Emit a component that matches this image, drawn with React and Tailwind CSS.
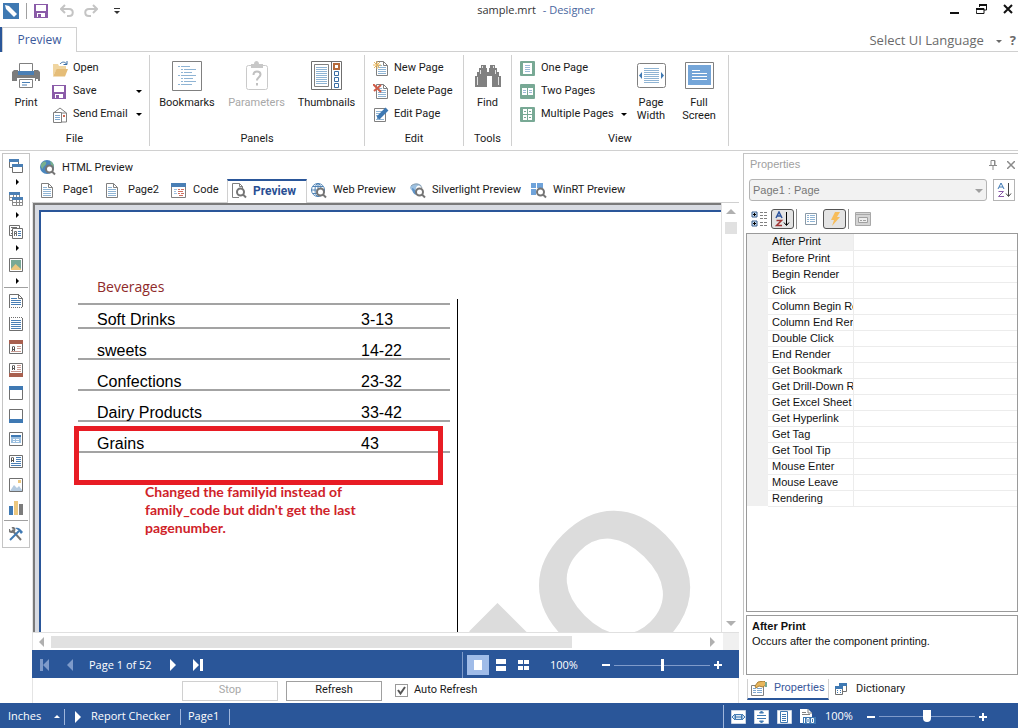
import React, { useState } from 'react';
import clsx from 'clsx';

const events = [
  'After Print', 'Before Print', 'Begin Render', 'Click', 'Column Begin Render', 'Column End Render',
  'Double Click', 'End Render', 'Get Bookmark', 'Get Drill-Down Report', 'Get Excel Sheet',
  'Get Hyperlink', 'Get Tag', 'Get Tool Tip', 'Mouse Enter', 'Mouse Leave', 'Rendering',
];

const families = [
  ['Soft Drinks', '3-13'],
  ['sweets', '14-22'],
  ['Confections', '23-32'],
  ['Dairy Products', '33-42'],
  ['Grains', '43'],
];

function Svg({ w = 16, h = 16, children, className }) {
  return (
    <svg width={w} height={h} viewBox={`0 0 ${w} ${h}`} fill="none" className={clsx('shrink-0', className)} aria-hidden="true">
      {children}
    </svg>
  );
}

// little triangle used by drop-downs, scrollbars and pagers
function Arrow({ dir = 'down', size = 3, className = 'fill-black' }) {
  const s = size;
  const shapes = {
    down: `0,0 ${2 * s},0 ${s},${s}`,
    up: `0,${s} ${2 * s},${s} ${s},0`,
    right: `0,0 ${s},${s} 0,${2 * s}`,
    left: `${s},0 0,${s} ${s},${2 * s}`,
  };
  const flat = dir === 'down' || dir === 'up';
  return (
    <svg width={flat ? 2 * s : s} height={flat ? s : 2 * s} className={clsx('shrink-0', className)} aria-hidden="true">
      <polygon points={shapes[dir]} />
    </svg>
  );
}

/* ---------- icons ---------- */

const SaveIcon = () => (
  <Svg w={14} h={14}>
    <path d="M0 0h14v14H0z" fill="#8a5ba8" />
    <path d="M2 1h10v6H2zM3 9h8v4H3z" fill="#fff" />
    <path d="M4 10h3v3H4z" fill="#8a5ba8" />
  </Svg>
);

const OpenIcon = () => (
  <Svg w={17}>
    <path d="M1 15V3h5l1 2h7v3H5z" fill="#f0d5a0" />
    <path d="M1 15.500 4.500 8H16l-3 7.500z" fill="#e5bd78" />
    <path d="M8 3c2-2.500 5-2.500 6.500 0M15 0v3.500h-3.500" stroke="#3a6ea5" />
  </Svg>
);

const MailIcon = () => (
  <Svg>
    <path d="M1.500 6 8 1l6.500 5v9h-5M14.500 6h-13" stroke="#808080" />
    <path d="M11 8h2v2h-2z" fill="#d0674f" />
    <path d="M1.500 5.500h8v10h-8z" fill="#fff" stroke="#808080" />
    <path d="M3 8.500h5M3 10.500h5M3 12.500h5" stroke="#7fa8cf" />
  </Svg>
);

const PrinterIcon = () => (
  <Svg w={28} h={26}>
    <path d="M7.500.500h13v8h-13z" fill="#fff" stroke="#808080" />
    <path d="M2 7h4v5h16V7h4l2 2v9h-5v-3H5v3H0V9z" fill="#7c7c7c" />
    <path d="M6 8h16v4H6z" fill="#4a7fb5" />
    <path d="M24 16h2v2h-2z" fill="#fff" />
    <path d="M7.500 16.500h13v8h-13z" fill="#fff" stroke="#808080" />
    <path d="M10 19.500h8M10 22h5" stroke="#4a7fb5" />
  </Svg>
);

const BookmarksIcon = () => (
  <Svg w={30} h={30}>
    <path d="M.500.500h29v29H.500z" fill="#fff" stroke="#808080" />
    <path d="M6 5.500h2M9 5.500h9M9 8.500h2M12 8.500h12M9 11.500h2M12 11.500h8M6 14.500h2M9 14.500h15M9 17.500h2M12 17.500h9M9 20.500h2M12 20.500h12M6 23.500h2M9 23.500h11" stroke="#8fb4d4" />
  </Svg>
);

const ParametersIcon = () => (
  <Svg w={24} h={30}>
    <rect x="1.500" y="4.500" width="21" height="24" rx="2" fill="#fff" stroke="#cacaca" />
    <path d="M6 3h3c0-4 5-4 5 0h4v4H6z" fill="#c8c8c8" />
    <path d="M8.500 14c0-5 7-4.500 7-.500 0 2.500-3.500 3-3.500 6M12 22v2.500" stroke="#c0c0c0" strokeWidth="2" />
  </Svg>
);

const ThumbnailsIcon = () => (
  <Svg w={31} h={29}>
    <path d="M.500.500h30v28H.500zM20.500.500v28" fill="#fff" stroke="#6f6f6f" />
    <path d="M3.500 3.500h14v22h-14z" stroke="#808080" />
    <path d="M5 6.500h11M5 8.500h11M5 10.500h11M5 12.500h11M5 14.500h11M5 16.500h11M5 18.500h11M5 20.500h11M5 22.500h11" stroke="#8fb4d4" />
    <path d="M23.500 10.500h4v4h-4zM23.500 16.500h4v4h-4zM23.500 22.500h4v4h-4z" stroke="#3a6ea5" />
    <path d="M23 3h5v5h-5z" stroke="#b5693a" strokeWidth="2" />
  </Svg>
);

// sheet with a folded corner, base of several icons
const Sheet = ({ x = 0 }) => (
  <g transform={`translate(${x} 0)`}>
    <path d="M.500.500h7l4 4v10H.500z" fill="#fff" stroke="#808080" />
    <path d="M7.500.500v4h4" stroke="#808080" />
    <path d="M2 4.500h4M2 6.500h8M2 8.500h8M2 10.500h8M2 12.500h8" stroke="#8fb4d4" />
  </g>
);

const PageIcon = () => <Svg w={12} h={15}><Sheet /></Svg>;

const NewPageIcon = () => (
  <Svg>
    <Sheet x={3} />
    <path d="M4 0v8M0 4h8M1 1l6 6M7 1 1 7" stroke="#e8b65c" />
  </Svg>
);

const DeletePageIcon = () => (
  <Svg>
    <Sheet x={3} />
    <path d="m0 0 8 8M8 1 1 7" stroke="#cf5b47" strokeWidth="2" />
  </Svg>
);

const EditPageIcon = () => (
  <Svg>
    <path d="M1.500 1.500h11v13h-11z" fill="#fff" stroke="#808080" />
    <path d="M3 4.500h8M3 6.500h6M3 8.500h4M3 12.500h8" stroke="#8fb4d4" />
    <path d="m5 11 9-9" stroke="#3f79b3" strokeWidth="4" />
    <path d="m4 12 1-4 3 3z" fill="#3f79b3" />
  </Svg>
);

const FindIcon = () => (
  <Svg w={26} h={24}>
    <path d="M6 1h5v3h1v4h2V4h1V1h5v3h2v4h2v4h2v11h-9V12h-5v11H0V12h2V8h2V4h2z" fill="#808080" />
    <path d="M2.500 13v8M23.500 13v8M5.500 6v4M20.500 6v4M7.500 2v2M18.500 2v2" stroke="#e2e2e2" />
  </Svg>
);

const GreenPages = ({ kind }) => (
  <Svg w={15} h={15}>
    <rect width="15" height="15" rx="1" fill="#78a995" />
    {kind === 1 && <path d="M3 2h9v11H3z" fill="#fff" />}
    {kind === 1 && <path d="M5 4.500h5M5 6.500h5M5 8.500h5M5 10.500h5" stroke="#9bb9d6" />}
    {kind === 2 && <path d="M2 4h5v7H2zM8 4h5v7H8z" fill="#fff" />}
    {kind === 2 && <path d="M3 6.500h3M3 8.500h3M9 6.500h3M9 8.500h3" stroke="#9bb9d6" />}
    {kind === 4 && <path d="M3 2h4v5H3zM8 2h4v5H8zM3 8h4v5H3zM8 8h4v5H8z" fill="#fff" />}
    {kind === 4 && <path d="M4 4.500h2M9 4.500h2M4 10.500h2M9 10.500h2" stroke="#78a995" />}
  </Svg>
);

const PageWidthIcon = () => (
  <Svg w={29} h={25}>
    <rect x=".5" y=".5" width="28" height="24" rx="2" fill="#fff" stroke="#808080" />
    <path d="M7 5.500h15M7 7.500h15M7 9.500h15M7 11.500h15M7 13.500h15M7 15.500h15M7 17.500h15M7 19.500h15" stroke="#8fb4d4" />
    <path d="M5 9v7l-3-3.500zM24 9v7l3-3.500z" fill="#3f79b3" />
  </Svg>
);

const FullScreenIcon = () => (
  <Svg w={29} h={27}>
    <path d="M.500.500h28v26H.500z" fill="#fff" stroke="#808080" />
    <path d="M3 3h23v20H3z" fill="#74a5d8" />
    <path d="M7 8.500h8M7 11.500h15M7 14.500h15M7 17.500h15" stroke="#fff" />
  </Svg>
);

const Lens = () => (
  <g stroke="#757575" strokeWidth="2">
    <circle cx="9.500" cy="9" r="3.500" fill="#fff" />
    <path d="m12 11.500 3 3" />
  </g>
);

const HtmlIcon = () => (
  <Svg>
    <circle cx="7" cy="7" r="7" fill="#4a86bd" />
    <path d="M2 3c3-3 5-1 4 1s-3 2-3 5c-2-1-3-4-1-6zM10 1c3 1 4 4 4 6l-3-2z" fill="#79b08d" />
    <Lens />
  </Svg>
);

const PreviewIcon = () => (
  <Svg>
    <path d="M8 14.500H1.500V.500h7l3 3V6M8.500.500v3h3" stroke="#808080" />
    <Lens />
  </Svg>
);

const WebIcon = () => (
  <Svg>
    <circle cx="7" cy="7" r="6.500" stroke="#4f83b5" />
    <path d="M7 0v14M0 7h14M2 3.500h10M2 10.500h10" stroke="#4f83b5" />
    <ellipse cx="7" cy="7" rx="3" ry="6.500" stroke="#4f83b5" />
    <Lens />
  </Svg>
);

const SilverlightIcon = () => (
  <Svg>
    <path d="M0 4C4-1 11 0 12 4 9 1 5 3 6 8 3 9 0 7 0 4z" fill="#9cc0e0" />
    <path d="M2 5c2 0 4 3 5 7-3 0-5-3-5-7z" fill="#5f93c7" />
    <path d="M1 3C4 0 10 0 12 5" stroke="#8b9dac" />
    <Lens />
  </Svg>
);

const WinRtIcon = () => (
  <Svg>
    <path d="M0 0h5v5H0zM6 0h6v5H6zM0 6h5v6H0zM6 6h6v6H6z" fill="#6fa3da" />
    <Lens />
  </Svg>
);

const CodeIcon = () => (
  <Svg w={15} h={15}>
    <path d="M.500.500h14v14H.500z" fill="#fff" stroke="#808080" />
    <path d="M0 0h15v4H0z" fill="#4a7fb5" />
    <path d="M3 6.500h3M3 8.500h2M3 10.500h3" stroke="#9cc0e0" />
    <path d="M7 6.500h2M10 6.500h3M7 8.500h5M7 10.500h2M10 10.500h3M8 12.500h4" stroke="#cf6f5f" />
  </Svg>
);

/* left toolbox icons, all 14x14 */

const toolIcons = {
  bands: (
    <>
      <path d="M.500.500h9v8h-9z" fill="#fff" stroke="#6f6f6f" />
      <path d="M0 0h10v3H0z" fill="#4a7fb5" />
      <path d="M3.500 5.500h10v8h-10z" fill="#fff" stroke="#6f6f6f" />
      <path d="M3 5h11v3H3z" fill="#4a7fb5" />
    </>
  ),
  cross: (
    <>
      <path d="M.500.500h10v8h-10zM.500 5.500h10M4.500 0v8M7.500 0v8" fill="#fff" stroke="#8a8a8a" />
      <path d="M0 0h11v3H0z" fill="#4a7fb5" />
      <path d="M3.500 5.500h10v8h-10zM3 10.500h11M7.500 8v6M10.500 8v6" fill="#fff" stroke="#8a8a8a" />
      <path d="M3 5h11v3H3z" fill="#4a7fb5" />
    </>
  ),
  components: (
    <>
      <path d="M.500.500h10v10h-10z" fill="#fff" stroke="#6f6f6f" />
      <path d="M2 2.500h6M2 5.500h1M2 8.500h1" stroke="#6f6f6f" />
      <path d="M3.500 3.500h10v10h-10z" fill="#fff" stroke="#6f6f6f" />
      <path d="M5.500 11V6.500h2V11M5 8.500h3" stroke="#6f6f6f" />
      <path d="M9 6.500h3M9 8.500h3M9 10.500h3" stroke="#4a7fb5" />
    </>
  ),
  picture: (
    <>
      <path d="M.500.500h13v13H.500z" fill="#fff" stroke="#6f6f6f" />
      <path d="M2 2h10v10H2z" fill="#78a995" />
      <path d="m2 11 4.500-5L12 11v1H2z" fill="#ecc77e" />
    </>
  ),
  title: (
    <>
      <path d="M.500 13V.500h9l4 4V13" fill="#fff" stroke="#6f6f6f" />
      <path d="M9.500 0v4.500h4" stroke="#6f6f6f" />
      <path d="M2 4.500h6M2 6.500h10M2 8.500h10M2 10.500h10" stroke="#4a7fb5" />
      <path d="M0 13.500h14" stroke="#6f6f6f" strokeDasharray="1 1" />
    </>
  ),
  summary: (
    <>
      <path d="M.500 1v12.500h13V1" stroke="#6f6f6f" />
      <path d="M0 .5h14" stroke="#6f6f6f" strokeDasharray="1 1" />
      <path d="M2 3.500h10M2 5.500h10M2 7.500h10M2 9.500h10M2 11.500h10" stroke="#4a7fb5" />
    </>
  ),
  groupHeader: (
    <>
      <path d="M.500.500h13v13H.500z" fill="#fff" stroke="#6f6f6f" />
      <path d="M0 0h14v4H0z" fill="#a9604f" />
      <path d="M3.500 11V7l1-1 1 1v4M3 9.500h3" stroke="#555" />
      <path d="M8 6.500h4M8 8.500h4M2 11.500h10" stroke="#c99c93" />
    </>
  ),
  groupFooter: (
    <>
      <path d="M.500.500h13v13H.500z" fill="#fff" stroke="#6f6f6f" />
      <path d="M0 10h14v4H0z" fill="#a9604f" />
      <path d="M3.500 7V3l1-1 1 1v4M3 5.500h3" stroke="#555" />
      <path d="M8 2.500h4M8 4.500h4M8 6.500h4M2 8.500h10" stroke="#c99c93" />
    </>
  ),
  header: (
    <>
      <path d="M.500.500h13v13H.500z" fill="#fff" stroke="#6f6f6f" />
      <path d="M0 0h14v4H0z" fill="#3f79b3" />
    </>
  ),
  footer: (
    <>
      <path d="M.500.500h13v13H.500z" fill="#fff" stroke="#6f6f6f" />
      <path d="M0 10h14v4H0z" fill="#3f79b3" />
    </>
  ),
  data: (
    <>
      <path d="M.500.500h13v13H.500z" fill="#fff" stroke="#6f6f6f" />
      <path d="M2 3h10v8H2z" fill="#9cc0e0" />
      <path d="M2 3h10v2H2z" fill="#3f79b3" />
      <path d="M4 7.500h2M7 7.500h3M4 9.500h2M7 9.500h3" stroke="#fff" />
    </>
  ),
  text: (
    <>
      <path d="M.500.500h13v12H.500z" fill="#fff" stroke="#6f6f6f" />
      <path d="M2.500 7V3l1-1 1 1v4M2 5.500h3" stroke="#555" />
      <path d="M7 2.500h5M7 4.500h5M7 6.500h5M2 8.500h10M2 10.500h10" stroke="#4a7fb5" />
    </>
  ),
  image: (
    <>
      <path d="M.500.500h13v13H.500z" fill="#fff" stroke="#6f6f6f" />
      <path d="m1 13 4-6 3 3 2-2 3 4v1z" fill="#b5cbe0" />
      <path d="M9 2h3v3H9z" fill="#ecc77e" />
    </>
  ),
  chart: (
    <>
      <path d="M0 5h4v9H0z" fill="#3f79b3" />
      <path d="M5 0h4v14H5z" fill="#ecc77e" />
      <path d="M10 3h4v11h-4z" fill="#7c7c7c" />
    </>
  ),
  tools: (
    <>
      <path d="m3 3 9 10" stroke="#757575" strokeWidth="2" />
      <path d="M0 2c0 3 3 4 5 2M3 0c2 1 3 2 2 4" stroke="#757575" strokeWidth="2" />
      <path d="m1 13 9-9" stroke="#3f79b3" strokeWidth="2" />
      <path d="M6 1c3-1 5 0 8 4l-2 2-3-4z" fill="#3f79b3" />
    </>
  ),
};

const toolbox = [
  { icon: 'bands', menu: true }, { icon: 'cross', menu: true }, { icon: 'components', menu: true }, { icon: 'picture', menu: true }, null,
  { icon: 'title' }, { icon: 'summary' }, { icon: 'groupHeader' }, { icon: 'groupFooter' }, { icon: 'header' },
  { icon: 'footer' }, { icon: 'data' }, { icon: 'text' }, { icon: 'image' }, { icon: 'chart' }, null,
  { icon: 'tools' },
];

/* ---------- top of the window ---------- */

function TitleBar() {
  return (
    <header className="flex h-[27px] items-start pt-[3px] pr-[5px] pl-[3px]">
      <div className="flex flex-1 items-center">
        <Svg>
          <path d="M0 0h16v16H0z" fill="#3f79b3" />
          <path d="m2 2 4 1 8 8-3 3-8-8z" fill="#fff" />
        </Svg>
        <span className="mx-[7px] h-4 w-px bg-[#a0a0a0]" />
        <button aria-label="Save"><SaveIcon /></button>
        <button aria-label="Undo" className="ml-3">
          <Svg w={14} h={14}><path d="M5 1 1 5l4 4M1 5h8c5 0 5 7 0 7H7" stroke="#c4c4c4" strokeWidth="2" /></Svg>
        </button>
        <button aria-label="Redo" className="ml-2.5">
          <Svg w={14} h={14}><path d="m9 1 4 4-4 4M13 5H5c-5 0-5 7 0 7h2" stroke="#c4c4c4" strokeWidth="2" /></Svg>
        </button>
        <button aria-label="Customize toolbar" className="ml-4">
          <Svg w={6} h={7}><path d="M0 .500h6" stroke="#333" /><path d="M0 3h6L3 6z" fill="#333" /></Svg>
        </button>
      </div>
      <h1 className="pl-14 font-['Open_Sans',sans-serif] text-[11px] leading-[14px] text-[#333]">
        sample.mrt <span className="ml-1 text-[#4a67a0]">- Designer</span>
      </h1>
      <div className="flex flex-1 justify-end gap-4">
        <button aria-label="Minimize"><Svg w={10} h={12}><path d="M0 10h9" stroke="#111" strokeWidth="2" /></Svg></button>
        <button aria-label="Restore">
          <Svg w={11} h={12}><path d="M3.500 4V2h7v5H8M0 5.500h8v5H.500z" stroke="#111" /><path d="M3 2h8M0 6h8" stroke="#111" strokeWidth="2" /></Svg>
        </button>
        <button aria-label="Close"><Svg w={10} h={12}><path d="m1 2 8 8M9 2l-8 8" stroke="#111" strokeWidth="2" /></Svg></button>
      </div>
    </header>
  );
}

function RibbonTabs() {
  return (
    <div className="flex h-[25px] items-stretch font-['Open_Sans',sans-serif]">
      <span className="w-0.5 bg-[#2a5699]" />
      <button className="w-[75px] border-x border-t border-[#d0d0d0] text-xs leading-[22px] text-[#3c5a9c]">Preview</button>
      <div className="flex flex-1 items-center justify-end border-b border-[#d0d0d0] pt-1 pr-0.5">
        <button className="flex items-center text-[13px] text-[#6a6a6a]">
          Select UI Language <Arrow size={3} className="ml-3 fill-[#6a6a6a]" />
        </button>
        <button aria-label="Help" className="ml-2 text-[13px] font-bold text-[#6a6a6a]">?</button>
      </div>
    </div>
  );
}

function Group({ label, className, children }) {
  return (
    <section className={clsx('flex shrink-0 flex-col border-r border-[#d0d0d0]', className)}>
      <div className="flex flex-1 pt-0.5">{children}</div>
      <h2 className="text-center leading-[14px]">{label}</h2>
    </section>
  );
}

function Big({ icon, label, className, disabled }) {
  return (
    <button disabled={disabled} className={clsx('flex shrink-0 flex-col items-center leading-[13px] disabled:text-[#a8a8a8]', className)}>
      <span className="mb-0.5 flex h-[37px] items-center">{icon}</span>
      {label}
    </button>
  );
}

function Small({ icon, label, menu }) {
  return (
    <button className="flex h-[23px] items-center text-left whitespace-nowrap">
      <span className="mr-1 flex w-[17px]">{icon}</span>
      {label}
      {menu && <Arrow className="ml-auto fill-black" />}
    </button>
  );
}

function Ribbon() {
  return (
    <nav className="flex h-[99px] border-b border-[#d0d0d0] pt-[3px] pb-1">
      <Group label="File" className="w-[150px]">
        <Big icon={<PrinterIcon />} label="Print" className="w-[52px]" />
        <div className="flex flex-1 flex-col pr-[7px]">
          <Small icon={<OpenIcon />} label="Open" />
          <Small icon={<SaveIcon />} label="Save" menu />
          <Small icon={<MailIcon />} label="Send Email" menu />
        </div>
      </Group>
      <Group label="Panels" className="w-[215px]">
        <Big icon={<BookmarksIcon />} label="Bookmarks" className="w-[74px]" />
        <Big icon={<ParametersIcon />} label="Parameters" className="w-[65px]" disabled />
        <Big icon={<ThumbnailsIcon />} label="Thumbnails" className="flex-1" />
      </Group>
      <Group label="Edit" className="w-[99px]">
        <div className="flex flex-col pl-2">
          <Small icon={<NewPageIcon />} label="New Page" />
          <Small icon={<DeletePageIcon />} label="Delete Page" />
          <Small icon={<EditPageIcon />} label="Edit Page" />
        </div>
      </Group>
      <Group label="Tools" className="w-12">
        <Big icon={<FindIcon />} label="Find" className="flex-1" />
      </Group>
      <Group label="View" className="w-[217px]">
        <div className="flex w-[115px] flex-col pl-2">
          <Small icon={<GreenPages kind={1} />} label="One Page" />
          <Small icon={<GreenPages kind={2} />} label="Two Pages" />
          <Small icon={<GreenPages kind={4} />} label="Multiple Pages" menu />
        </div>
        <Big icon={<PageWidthIcon />} label={<>Page<br />Width</>} className="w-12" />
        <Big icon={<FullScreenIcon />} label={<>Full<br />Screen</>} className="w-12" />
      </Group>
    </nav>
  );
}

/* ---------- left ---------- */

function Toolbox() {
  return (
    <aside className="mt-0.5 ml-0.5 flex w-7 shrink-0 flex-col self-start border border-[#c4c4c4] pb-0.5">
      {toolbox.map((t, i) => t === null ? (
        <span key={i} className="mx-px my-px h-px bg-[#a0a0a0]" />
      ) : (
        <button key={i} aria-label={t.icon} className="flex flex-col items-center">
          <span className="flex h-[23px] items-center"><Svg w={14} h={14}>{toolIcons[t.icon]}</Svg></span>
          {t.menu && <span className="flex h-2.5 items-center pl-0.5"><Arrow dir="right" /></span>}
        </button>
      ))}
    </aside>
  );
}

/* ---------- centre ---------- */

function DocTab({ icon, label, active, className }) {
  return (
    <button
      className={clsx(
        'flex h-6 shrink-0 items-center whitespace-nowrap',
        active ? 'border-x border-t-2 border-x-[#d0d0d0] border-t-[#2a5699] pb-0.5 text-xs font-bold text-[#2a4f94]' : 'border-b border-[#d0d0d0]',
        className,
      )}
    >
      <span className="mr-[6px] flex w-4">{icon}</span>
      {label}
    </button>
  );
}

function DocTabs() {
  return (
    <div className="pt-[6px]">
      <button className="ml-2 flex h-[22px] items-center gap-1.5"><HtmlIcon />HTML Preview</button>
      <div className="flex">
        <DocTab icon={<PageIcon />} label="Page1" className="w-[74px] pl-[9px]" />
        <DocTab icon={<PageIcon />} label="Page2" className="w-[65px]" />
        <DocTab icon={<CodeIcon />} label="Code" className="w-14" />
        <DocTab icon={<PreviewIcon />} label="Preview" active className="w-20 pl-[3px]" />
        <DocTab icon={<WebIcon />} label="Web Preview" className="w-[103px] pl-1" />
        <DocTab icon={<SilverlightIcon />} label="Silverlight Preview" className="w-[121px]" />
        <DocTab icon={<WinRtIcon />} label="WinRT Preview" className="flex-1" />
      </div>
    </div>
  );
}

function Report() {
  return (
    <div className="relative flex flex-1 overflow-hidden border-t-2 border-l-2 border-[#2a5699] bg-white">
      <svg className="absolute inset-0 h-full w-full" aria-hidden="true">
        <text
          transform="translate(573 372) rotate(-45)"
          x="80"
          y="74"
          textAnchor="end"
          className="fill-[#dcdcdc] font-['Liberation_Sans',Arial,sans-serif] text-[208px] font-bold"
        >
          DEMO
        </text>
      </svg>
      <div className="relative w-[416px] shrink-0 pl-[37px] font-['Liberation_Sans',Arial,sans-serif]">
        <table className="mt-[65px] w-[372px] text-base leading-[14px] text-black">
          <caption className="h-[26px] pl-[19px] text-left font-['Open_Sans',sans-serif] text-sm leading-[20px] text-[#8f2a2a]">Beverages</caption>
          <tbody className="border-t-2 border-[#a3a3a3]">
            {families.map(([name, pages]) => (
              <tr key={name} className="h-[31px] border-b-2 border-[#a3a3a3] first:h-6">
                <td className="w-[283px] pl-[19px] align-bottom">{name}</td>
                <td className="align-bottom">{pages}</td>
              </tr>
            ))}
          </tbody>
        </table>
        <div className="absolute top-[214px] left-[33px] h-[59px] w-[369px] border-[5px] border-[#e81c24]" />
        <p className="mt-[30px] ml-[67px] font-['Lato',sans-serif] text-sm leading-[18px] font-bold text-[#cf2229]">
          Changed the familyid instead of<br />family_code but didn't get the last<br />pagenumber.
        </p>
      </div>
      <div className="relative mt-[87px] flex-1 border-l border-black" />
    </div>
  );
}

function Viewer() {
  return (
    <div className="flex min-h-0 flex-1 flex-col border-l border-[#e4e4e4]">
      <div className="flex min-h-0 flex-1">
        <div className="flex flex-1 border-t-2 border-l-2 border-[#7a7a7a] bg-[#d8dbe2] pt-[5px] pl-1"><Report /></div>
        <div className="flex w-[18px] flex-col items-center border-l border-[#e0e0e0] py-1.5">
          <Arrow dir="up" size={5} className="fill-[#b0b0b0]" />
          <span className="mt-2 h-3 w-3 bg-[#e1e1e1]" />
          <Arrow dir="down" size={5} className="mt-auto fill-[#b0b0b0]" />
        </div>
      </div>
      <div className="flex h-[18px] shrink-0 border-t border-[#e0e0e0]">
        <div className="flex flex-1 items-center pr-2 pl-1.5">
          <Arrow dir="left" size={5} className="fill-[#b0b0b0]" />
          <span className="ml-[7px] h-3 w-[77%] bg-[#e1e1e1]" />
          <Arrow dir="right" size={5} className="ml-auto fill-[#b0b0b0]" />
        </div>
        <span className="w-4 bg-[#f0f0f0]" />
      </div>
    </div>
  );
}

function Zoom({ label, value, onChange, pointed }) {
  return (
    <>
      <button aria-label={`${label} out`}><Svg w={8} h={8}><path d="M0 4h8" stroke="#fff" strokeWidth="2" /></Svg></button>
      <input
        type="range"
        min="0"
        max="200"
        aria-label={label}
        value={value}
        onChange={e => onChange(Number(e.target.value))}
        className={clsx(
          'mx-1 h-3 w-24 appearance-none bg-transparent [&::-webkit-slider-runnable-track]:h-px [&::-webkit-slider-runnable-track]:bg-[#7f9bca]',
          '[&::-webkit-slider-thumb]:-mt-1.5 [&::-webkit-slider-thumb]:h-3 [&::-webkit-slider-thumb]:appearance-none [&::-webkit-slider-thumb]:bg-white',
          pointed
            ? '[&::-webkit-slider-thumb]:w-2 [&::-webkit-slider-thumb]:rounded-b-sm'
            : '[&::-webkit-slider-thumb]:w-[3px]',
        )}
      />
      <button aria-label={`${label} in`}><Svg w={8} h={8}><path d="M0 4h8M4 0v8" stroke="#fff" strokeWidth="2" /></Svg></button>
    </>
  );
}

function Pager() {
  const [zoom, setZoom] = useState(100);
  return (
    <div className="flex h-7 shrink-0 items-center bg-[#2a5699] pt-0.5 pr-[17px] pl-2 font-['Open_Sans',sans-serif] text-[11px] text-white">
      <button aria-label="First page"><Svg w={10} h={12}><path d="M0 0h3v12H0zM9 0v12L3 6z" fill="#7f9bca" /></Svg></button>
      <button aria-label="Previous page" className="ml-[17px]"><Arrow dir="left" size={6} className="fill-[#7f9bca]" /></button>
      <span className="ml-4 w-[65px] whitespace-nowrap">Page 1 of 52</span>
      <button aria-label="Next page" className="ml-4"><Arrow dir="right" size={6} className="fill-white" /></button>
      <button aria-label="Last page" className="ml-[17px]"><Svg w={10} h={12}><path d="M7 0h3v12H7zM0 0v12l6-6z" fill="#fff" /></Svg></button>
      <span className="ml-auto h-[26px] w-px bg-[#7f9bca]" />
      <button aria-label="Single page" className="ml-1 flex h-5 w-[22px] items-center justify-center bg-[#a0bce8]"><span className="h-2.5 w-2 bg-white" /></button>
      <button aria-label="Continuous" className="ml-[7px]"><Svg w={10} h={12}><path d="M0 0h10v5H0zM0 7h10v5H0z" fill="#fff" /></Svg></button>
      <button aria-label="Multiple pages" className="mr-[21px] ml-3"><Svg w={11} h={12}><path d="M0 1h5v4H0zM6 1h5v4H6zM0 7h5v4H0zM6 7h5v4H6z" fill="#fff" /></Svg></button>
      <span className="mr-[22px] w-[30px]">100%</span>
      <Zoom label="Preview zoom" value={zoom} onChange={setZoom} />
    </div>
  );
}

function RefreshBar() {
  const [auto, setAuto] = useState(true);
  return (
    <div className="flex h-[25px] shrink-0 items-center border-r border-l border-[#e4e4e4] pl-[149px]">
      <button disabled className="h-5 w-24 border border-[#d0d0d0] text-[#a8a8a8]">Stop</button>
      <button className="ml-2 h-5 w-24 border border-[#a0a0a0]">Refresh</button>
      <label className="ml-[13px] flex items-center gap-1.5">
        <span className="relative flex">
          <input type="checkbox" checked={auto} onChange={e => setAuto(e.target.checked)} className="h-[13px] w-[13px] appearance-none border border-[#9a9a9a]" />
          {auto && <Svg w={13} h={13} className="pointer-events-none absolute inset-0"><path d="m3 6 2.500 3.500L10 3" stroke="#555" strokeWidth="2" /></Svg>}
        </span>
        Auto Refresh
      </label>
    </div>
  );
}

/* ---------- right ---------- */

function SortIcon({ dark }) {
  return (
    <Svg w={15} h={16}>
      <path d="m1 7 3-6 3 6M2 5h4" stroke={dark ? '#2f559e' : '#3f79b3'} strokeWidth={dark ? 1.5 : 1} />
      <path d="M1.500 9.500h5l-5 5H7" stroke={dark ? '#a03535' : '#8a5ba8'} strokeWidth={dark ? 1.5 : 1} />
      <path d="M11.500 1v13M9 11.500l2.500 3 2.500-3" stroke={dark ? '#000' : '#444'} />
    </Svg>
  );
}

function PropertiesPanel() {
  return (
    <aside className="ml-1 flex w-[275px] shrink-0 flex-col font-['Liberation_Sans',Arial,sans-serif]">
      <div className="mt-0.5 flex min-h-0 flex-1 flex-col border-t border-l border-[#c4c4c4] pl-0.5">
        <div className="flex h-[21px] items-center pr-[3px] pl-1 text-[#a0a0a0]">
          Properties
          <button aria-label="Pin" className="ml-auto"><Svg w={8} h={10}><path d="M2 5V.500h4V5M5.500 1v4M0 5.500h8M4 6v4" stroke="#8a8a8a" /></Svg></button>
          <button aria-label="Close panel" className="ml-2.5"><Svg w={8} h={8}><path d="m0 0 8 8M8 0 0 8" stroke="#8a8a8a" strokeWidth="1.500" /></Svg></button>
        </div>
        <div className="mt-1 flex gap-1.5 pr-[3px] pl-[3px]">
          <div className="relative flex-1">
            <select aria-label="Component" className="h-[22px] w-full appearance-none rounded-[3px] border border-[#b4b4b4] bg-[#f2f2f2] px-[3px] text-[#777]">
              <option>Page1 : Page</option>
            </select>
            <span className="pointer-events-none absolute top-[10px] right-1"><Arrow size={4} className="fill-[#a0a0a0]" /></span>
          </div>
          <button aria-label="Sort" className="flex h-[22px] w-[22px] items-center justify-center border border-[#b4b4b4]"><SortIcon /></button>
        </div>
        <div className="flex h-8 items-center pt-1 pl-[5px]">
          <button aria-label="Categorized">
            <Svg w={17}>
              <path d="M1 1h5v5H1zM1 10h5v5H1z" fill="#cfe0f0" stroke="#3a6090" strokeLinejoin="round" />
              <path d="M2 3.500h3M3.500 2v3M2 12.500h3M3.500 11v3" stroke="#000" />
              <path d="M9 1.500h3M13 1.500h3M9 4.500h3M13 4.500h3M9 7.500h3M13 7.500h3M9 11.500h3M13 11.500h3M9 14.500h3M13 14.500h3" stroke="#808080" />
            </Svg>
          </button>
          <button aria-label="Alphabetical" className="ml-[3px] flex h-5 w-[23px] items-center justify-center rounded-[3px] border border-[#555] bg-[#e4e4e4]"><SortIcon dark /></button>
          <span className="ml-0.5 h-5 w-px bg-[#909090]" />
          <button aria-label="Property list" className="ml-2">
            <Svg w={12} h={12}><path d="M.500.500h11v11H.500z" stroke="#8a9aa8" /><path d="M2 2.500h2M5 2.500h5M2 4.500h2M5 4.500h5M2 6.500h2M5 6.500h5M2 8.500h2M5 8.500h5" stroke="#8fb4d4" /></Svg>
          </button>
          <button aria-label="Events" className="ml-[6px] flex h-5 w-[23px] items-center justify-center rounded-[3px] border border-[#555] bg-[#e4e4e4]">
            <Svg w={10} h={14}><path d="M5 0h5L7 5h3L2 14l2-6H1z" fill="#f7bd5b" /></Svg>
          </button>
          <span className="ml-0.5 h-5 w-px bg-[#909090]" />
          <button aria-label="Property pages" className="ml-1.5" disabled>
            <Svg w={16} h={14}><path d="M.500.500h15v13H.500z" fill="#d4d4d4" stroke="#a8a8a8" /><path d="M1 2.500h14" stroke="#a8a8a8" /><path d="M3.500 5.500h9v5h-9zM5 8.500h2M8 8.500h3" stroke="#a0a0a0" fill="#eee" /></Svg>
          </button>
        </div>
        <div className="min-h-0 flex-1 overflow-hidden border border-[#9a9a9a]">
          <table className="w-full table-fixed leading-[15px] text-[#111]">
            <tbody>
              {events.map((name, i) => (
                <tr key={name} className="h-4">
                  <td className="w-[21px] bg-[#f0f0f0]" />
                  <th scope="row" className={clsx('w-[85px] overflow-hidden border-r border-b border-[#ececec] pl-1 text-left font-normal whitespace-nowrap', i === 0 && 'bg-[#f0f0f0]')}>{name}</th>
                  <td className="border-b border-[#ececec]" />
                </tr>
              ))}
            </tbody>
          </table>
        </div>
        <div className="mt-[3px] h-[60px] shrink-0 border border-[#9a9a9a] px-[5px] pt-[3px] leading-[15px] text-[#111]">
          <h3 className="font-bold">After Print</h3>
          <p>Occurs after the component printing.</p>
        </div>
      </div>
      <div className="ml-1 flex h-[28px] shrink-0 items-start pt-1 font-['Roboto',sans-serif]">
        <button className="flex h-[21px] w-[82px] items-center gap-1.5 border-r border-b-2 border-l border-x-[#d0d0d0] border-b-[#2a5699] pl-[3px] text-[#3c5a9c]">
          <Svg w={17}>
            <path d="M.500 4.500h12v10H.500z" fill="#fff" stroke="#808080" />
            <path d="M2 7.500h3M6 7.500h5M2 9.500h3M6 9.500h5M2 11.500h3M6 11.500h5" stroke="#7fa8cf" />
            <path d="m4 5 3-4 6-1 3 3-4 3-4-1-3 2z" fill="#e8b65c" stroke="#a87f35" />
            <path d="M14 1h2v5h-2z" fill="#78a995" />
          </Svg>
          Properties
        </button>
        <button className="ml-[6px] flex h-5 items-center gap-[9px]">
          <Svg w={12} h={12}>
            <path d="M4.500.500h7v8h-7z" fill="#fff" stroke="#6f6f6f" /><path d="M4 0h8v3H4z" fill="#3f79b3" />
            <path d="M.500 4.500h7v7h-7z" fill="#fff" stroke="#6f6f6f" /><path d="M0 3h8v3H0z" fill="#3f79b3" />
            <path d="M2 7.500h1M5 7.500h1M2 9.500h1M5 9.500h1" stroke="#3f79b3" />
          </Svg>
          Dictionary
        </button>
      </div>
    </aside>
  );
}

/* ---------- bottom ---------- */

function StatusBar() {
  const [zoom, setZoom] = useState(100);
  const views = [
    ['Fit width', <path key="p" d="m1 7 3-3v6zM14 7l-3-3v6zM4.500 4.500h6v5h-6zM5 7h5" fill="#dbe7f3" stroke="#3f79b3" />],
    ['Fit height', <path key="p" d="m7.500 1 2 2h-4zM7.500 13l2-2h-4zM3 5.500h9M3 8.500h9" fill="#3f79b3" stroke="#3f79b3" />],
    ['Whole page', <path key="p" d="M3.500 1.500h7v11h-7zM5 4.500h4M5 6.500h4M5 8.500h4M5 10.500h4" stroke="#3f79b3" />],
  ];
  return (
    <footer className="flex h-[25px] shrink-0 items-center bg-[#2a5699] pt-0.5 pr-[31px] pl-2 font-['Open_Sans',sans-serif] text-[11px] whitespace-nowrap text-white">
      <button className="flex w-14 items-center">Inches <Arrow dir="up" size={3} className="mr-1 ml-auto fill-white" /></button>
      <span className="h-4 w-px bg-[#9fb6dc]" />
      <button className="ml-2.5 flex w-[105px] items-center gap-2.5"><Arrow dir="right" size={6} className="fill-white" />Report Checker</button>
      <span className="h-4 w-px bg-[#9fb6dc]" />
      <span className="w-12 pl-[7px]">Page1</span>
      <span className="h-4 w-px bg-[#9fb6dc]" />
      <span className="ml-auto h-[23px] w-px bg-[#9fb6dc]" />
      <div className="ml-[7px] flex gap-2">
        {views.map(([label, shape]) => (
          <button key={label} aria-label={label}>
            <Svg w={15} h={14}><path d="M.500.500h14v13H.500z" fill="#fff" stroke="#c8d4e4" />{shape}</Svg>
          </button>
        ))}
        <button aria-label="Actual size">
          <Svg w={16} h={15}>
            <path d="M0 0h8l4 4v10H0z" fill="#fff" />
            <path d="M2 3.500h4M2 5.500h8M8 0v4h4" stroke="#808080" />
            <path d="M3 8h13v7H3z" fill="#3f79b3" />
            <path d="M4.500 9v5M7 9.500h2v4H7zM11.500 9.500h2v4h-2z" stroke="#fff" />
          </Svg>
        </button>
      </div>
      <span className="mr-3 ml-[9px] w-[30px]">100%</span>
      <Zoom label="Page zoom" value={zoom} onChange={setZoom} pointed />
    </footer>
  );
}

export default function App() {
  return (
    <div className="flex h-screen flex-col overflow-hidden bg-white font-['Roboto',sans-serif] text-[11px] text-[#1a1a1a]">
      <TitleBar />
      <RibbonTabs />
      <Ribbon />
      <div className="flex min-h-0 flex-1">
        <Toolbox />
        <main className="ml-0.5 flex min-w-0 flex-1 flex-col">
          <DocTabs />
          <Viewer />
          <Pager />
          <RefreshBar />
        </main>
        <PropertiesPanel />
      </div>
      <StatusBar />
    </div>
  );
}
